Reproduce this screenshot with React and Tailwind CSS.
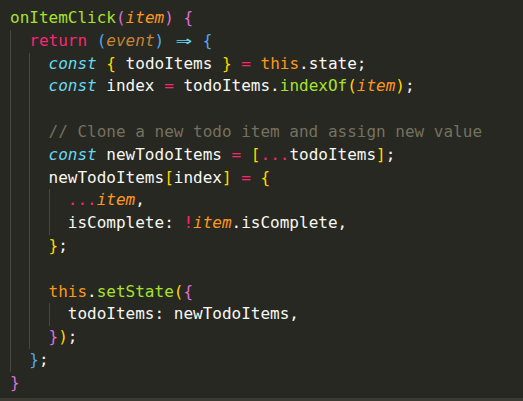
const C = {
  pink: "text-[#f92672]",
  green: "text-[#a6e22e]",
  orange: "text-[#fd971f]",
  cyan: "text-[#66d9ef]",
  comment: "text-[#75715e]",
  mag: "text-[#da70d6]",
  yel: "text-[#ffd700]",
  blue: "text-[#4fa8f0]",
};

const Line = ({ children }) => (
  <div className="h-[22.8px] leading-[22.8px] whitespace-pre">{children}</div>
);

const Block = ({ children }) => (
  <div className="border-l border-[#46473f] pl-[calc(2ch-1px)]">{children}</div>
);

const Param = ({ children, dim }) => (
  <span className={`italic ${dim ? "text-[#c58436]" : C.orange}`}>{children}</span>
);

export default function App() {
  return (
    <div className="h-[401px] w-[523px] bg-[#272822] flex flex-col overflow-hidden">
      <div
        className="flex-1 pt-[7px] pl-[10px] text-[16px] text-[#f8f8f2]"
        style={{ fontFamily: '"DejaVu Sans Mono", "Liberation Mono", monospace' }}
      >
        <Line>
          <span className={C.green}>onItemClick</span>
          <span className={C.mag}>(</span>
          <Param>item</Param>
          <span className={C.mag}>)</span> <span className={C.mag}>{"{"}</span>
        </Line>
        <Block>
          <Line>
            <span className={C.pink}>return</span> <span className={C.blue}>(</span>
            <Param dim>event</Param>
            <span className={C.blue}>)</span>{" "}
            <span className="inline-block w-[2ch] text-center align-top">
              <span className={`inline-block scale-x-[1.7] scale-y-[1.1] ${C.cyan}`}>⇒</span>
            </span>{" "}
            <span className={C.blue}>{"{"}</span>
          </Line>
          <Block>
            <Line>
              <span className={`italic ${C.cyan}`}>const</span>{" "}
              <span className={C.yel}>{"{"}</span> todoItems{" "}
              <span className={C.yel}>{"}"}</span> <span className={C.pink}>=</span>{" "}
              <span className={C.orange}>this</span>.state;
            </Line>
            <Line>
              <span className={`italic ${C.cyan}`}>const</span> index{" "}
              <span className={C.pink}>=</span> todoItems.
              <span className={C.green}>indexOf</span>
              <span className={C.yel}>(</span>
              <Param>item</Param>
              <span className={C.yel}>)</span>;
            </Line>
            <Line> </Line>
            <Line>
              <span className={C.comment}>// Clone a new todo item and assign new value</span>
            </Line>
            <Line>
              <span className={`italic ${C.cyan}`}>const</span> newTodoItems{" "}
              <span className={C.pink}>=</span> <span className={C.yel}>[</span>
              <span className={C.pink}>...</span>todoItems
              <span className={C.yel}>]</span>;
            </Line>
            <Line>
              newTodoItems<span className={C.yel}>[</span>index
              <span className={C.yel}>]</span> <span className={C.pink}>=</span>{" "}
              <span className={C.yel}>{"{"}</span>
            </Line>
            <Block>
              <Line>
                <span className={C.pink}>...</span>
                <Param>item</Param>,
              </Line>
              <Line>
                isComplete: <span className={C.pink}>!</span>
                <Param>item</Param>.isComplete,
              </Line>
            </Block>
            <Line>
              <span className={C.yel}>{"}"}</span>;
            </Line>
            <Line> </Line>
            <Line>
              <span className={C.orange}>this</span>.<span className={C.green}>setState</span>
              <span className={C.yel}>(</span>
              <span className={C.mag}>{"{"}</span>
            </Line>
            <Block>
              <Line>todoItems: newTodoItems,</Line>
            </Block>
            <Line>
              <span className={C.mag}>{"}"}</span>
              <span className={C.yel}>)</span>;
            </Line>
          </Block>
          <Line>
            <span className={C.blue}>{"}"}</span>;
          </Line>
        </Block>
        <Line>
          <span className={C.mag}>{"}"}</span>
        </Line>
      </div>
      <div className="h-[3px] bg-[#3b3a32]" />
    </div>
  );
}
